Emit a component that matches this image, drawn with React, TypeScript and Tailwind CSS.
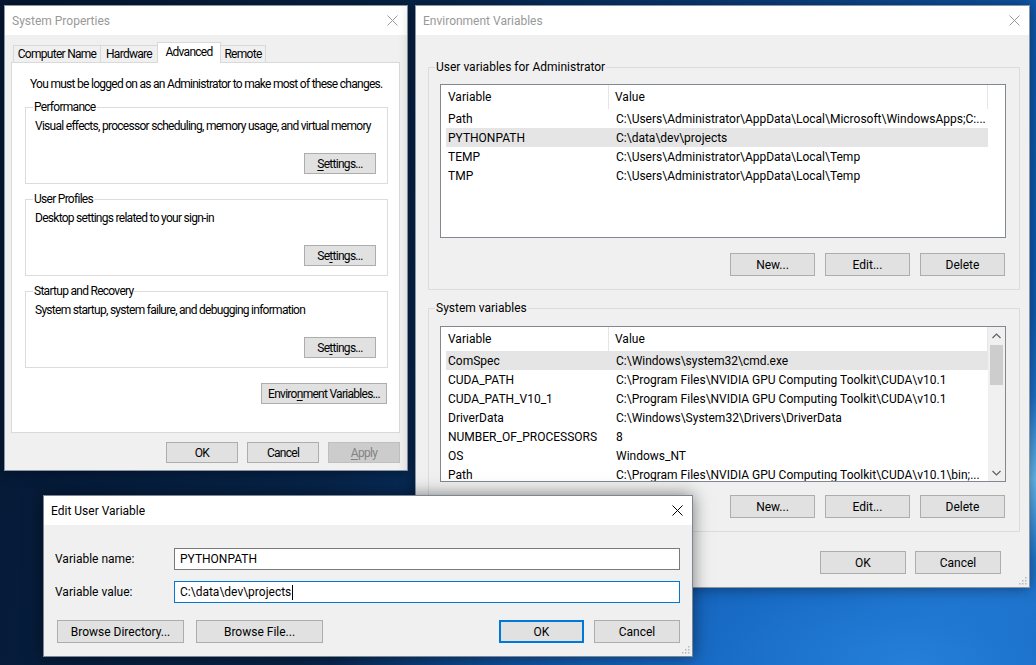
import React from 'react';

const FONT = "[font-family:'Segoe_UI',Roboto,'Liberation_Sans',sans-serif]";

function CloseX({ active }: { active?: boolean }) {
  return (
    <svg width="11" height="11" viewBox="0 0 11 11" className={active ? 'text-black' : 'text-[#999999]'}>
      <path d="M0.5 0.5L10.5 10.5M10.5 0.5L0.5 10.5" stroke="currentColor" strokeWidth="1" />
    </svg>
  );
}

function TitleBar({ title, active }: { title: string; active?: boolean }) {
  return (
    <div className="flex h-[29px] shrink-0 items-center justify-between bg-white pl-[7px] pr-[9px]">
      <span className={active ? 'text-black' : 'text-[#999999]'}>{title}</span>
      <CloseX active={active} />
    </div>
  );
}

type BtnProps = {
  children: React.ReactNode;
  className?: string;
  variant?: 'normal' | 'disabled' | 'default';
};

function Btn({ children, className = '', variant = 'normal' }: BtnProps) {
  const look =
    variant === 'disabled'
      ? 'border border-[#bfbfbf] bg-[#cccccc] text-[#838383]'
      : variant === 'default'
        ? 'border-2 border-[#0078d7] bg-[#e1e1e1] text-black'
        : 'border border-[#adadad] bg-[#e1e1e1] text-black';
  return (
    <div className={`flex shrink-0 items-center justify-center whitespace-nowrap ${look} ${className}`}>{children}</div>
  );
}

function U({ children }: { children: React.ReactNode }) {
  return <span className="underline underline-offset-[2px]">{children}</span>;
}

function SettingsGroup({ title, text, btn }: { title: string; text: string; btn: React.ReactNode }) {
  return (
    <fieldset className="border border-[#dcdcdc] pl-[8px] pr-[11px] pb-[9px]">
      <legend className="ml-[-1px] px-[1px]">{title}</legend>
      <p className="mt-[3px] ml-px whitespace-nowrap">{text}</p>
      <div className="mt-[19px] flex justify-end">
        <Btn className="h-[21px] w-[72px]">{btn}</Btn>
      </div>
    </fieldset>
  );
}

function SystemProperties() {
  const tabs = [
    { label: 'Computer Name', w: 'w-[88px]' },
    { label: 'Hardware', w: 'w-[58px]' },
    { label: 'Advanced', w: 'w-[64px]', selected: true },
    { label: 'Remote', w: 'w-[46px]' },
  ];
  return (
    <div className="absolute left-[4px] top-[5px] flex h-[466px] w-[404px] flex-col border border-[#8a96a6] bg-[#f0f0f0] shadow-[0_0_14px_rgba(0,0,0,0.45)]">
      <TitleBar title="System Properties" />
      <div className="flex flex-col pl-[6px] pr-[7px] pt-[7px] tracking-[-0.72px]">
        <div className="relative z-10 -mb-px flex h-[21px] items-end pl-[2px]">
          {tabs.map((t) =>
            t.selected ? (
              <div
                key={t.label}
                className={`-ml-px flex h-[21px] ${t.w} items-start justify-center whitespace-nowrap border border-b-0 border-[#d9d9d9] bg-white pt-[1px]`}
              >
                {t.label}
              </div>
            ) : (
              <div
                key={t.label}
                className={`-ml-px flex h-[18px] ${t.w} items-center justify-center whitespace-nowrap border border-[#d9d9d9] bg-[#f0f0f0] first:ml-0`}
              >
                {t.label}
              </div>
            ),
          )}
        </div>
        <div className="flex h-[371px] flex-col border border-[#d9d9d9] bg-white pl-[13px] pr-[11px] pt-[13px]">
          <p className="ml-[5px] whitespace-nowrap">You must be logged on as an Administrator to make most of these changes.</p>
          <div className="mt-[7px] flex flex-col gap-[7px]">
            <SettingsGroup
              title="Performance"
              text="Visual effects, processor scheduling, memory usage, and virtual memory"
              btn={<><U>S</U>ettings...</>}
            />
            <SettingsGroup
              title="User Profiles"
              text="Desktop settings related to your sign-in"
              btn={<>Se<U>t</U>tings...</>}
            />
            <SettingsGroup
              title="Startup and Recovery"
              text="System startup, system failure, and debugging information"
              btn={<>Se<U>t</U>tings...</>}
            />
          </div>
          <div className="mt-[15px] flex justify-end">
            <Btn className="mr-px h-[21px] w-[126px]">
              <span>
                Enviro<U>n</U>ment Variables...
              </span>
            </Btn>
          </div>
        </div>
        <div className="mt-[9px] flex justify-end gap-[9px]">
          <Btn className="h-[21px] w-[72px]">OK</Btn>
          <Btn className="h-[21px] w-[72px]">Cancel</Btn>
          <Btn variant="disabled" className="h-[21px] w-[72px]">
            <U>A</U>pply
          </Btn>
        </div>
      </div>
    </div>
  );
}

function Chevron({ up }: { up?: boolean }) {
  return (
    <svg width="9" height="6" viewBox="0 0 9 6" className="text-[#606060]">
      <path d={up ? 'M0.5 5L4.5 1L8.5 5' : 'M0.5 1L4.5 5L8.5 1'} fill="none" stroke="currentColor" strokeWidth="1.2" />
    </svg>
  );
}

type Row = [string, string];

function ListBox({ rows, height, scroll }: { rows: Row[]; height: string; scroll?: boolean }) {
  return (
    <div className={`flex ${height} overflow-hidden border border-[#828790] bg-white`}>
      <div className="flex w-[547px] flex-col">
        <div className="flex h-[24px] shrink-0">
          <div className="flex w-[168px] items-center border-r border-[#e5e5e5] pl-[7px]">Variable</div>
          <div className="flex w-[379px] items-center border-r border-[#e5e5e5] pl-[6px]">Value</div>
        </div>
        {rows.map(([name, value], i) => (
          <div
            key={name + i}
            className={`ml-[5px] flex h-[19px] w-[542px] shrink-0 items-center ${i === (scroll ? 0 : 1) ? 'bg-[#e5e5e5]' : ''}`}
          >
            <span className="w-[170px] pl-[2px] whitespace-nowrap">{name}</span>
            <span className="whitespace-nowrap">{value}</span>
          </div>
        ))}
      </div>
      {scroll && (
        <div className="flex w-[17px] flex-col bg-[#f0f0f0]">
          <div className="flex h-[17px] items-center justify-center">
            <Chevron up />
          </div>
          <div className="mx-[2px] mt-px h-[40px] bg-[#cdcdcd]" />
          <div className="flex-1" />
          <div className="flex h-[17px] items-center justify-center">
            <Chevron />
          </div>
        </div>
      )}
    </div>
  );
}

function Grip() {
  return (
    <svg width="9" height="9" viewBox="0 0 9 9" className="absolute bottom-[2px] right-[2px] text-[#b8b8b8]">
      <rect x="7" y="1" width="1.5" height="1.5" fill="currentColor" />
      <rect x="4" y="4" width="1.5" height="1.5" fill="currentColor" />
      <rect x="7" y="4" width="1.5" height="1.5" fill="currentColor" />
      <rect x="1" y="7" width="1.5" height="1.5" fill="currentColor" />
      <rect x="4" y="7" width="1.5" height="1.5" fill="currentColor" />
      <rect x="7" y="7" width="1.5" height="1.5" fill="currentColor" />
    </svg>
  );
}

const userVars: Row[] = [
  ['Path', 'C:\\Users\\Administrator\\AppData\\Local\\Microsoft\\WindowsApps;C:...'],
  ['PYTHONPATH', 'C:\\data\\dev\\projects'],
  ['TEMP', 'C:\\Users\\Administrator\\AppData\\Local\\Temp'],
  ['TMP', 'C:\\Users\\Administrator\\AppData\\Local\\Temp'],
];

const systemVars: Row[] = [
  ['ComSpec', 'C:\\Windows\\system32\\cmd.exe'],
  ['CUDA_PATH', 'C:\\Program Files\\NVIDIA GPU Computing Toolkit\\CUDA\\v10.1'],
  ['CUDA_PATH_V10_1', 'C:\\Program Files\\NVIDIA GPU Computing Toolkit\\CUDA\\v10.1'],
  ['DriverData', 'C:\\Windows\\System32\\Drivers\\DriverData'],
  ['NUMBER_OF_PROCESSORS', '8'],
  ['OS', 'Windows_NT'],
  ['Path', 'C:\\Program Files\\NVIDIA GPU Computing Toolkit\\CUDA\\v10.1\\bin;...'],
];

function EnvironmentVariables() {
  return (
    <div className="absolute left-[415px] top-[5px] flex h-[583px] w-[615px] flex-col border border-[#8a96a6] bg-[#f0f0f0] shadow-[0_0_14px_rgba(0,0,0,0.45)]">
      <TitleBar title="Environment Variables" />
      <div className="flex flex-col pl-[12px] pr-[9px] pt-[24px]">
        <fieldset className="border border-[#dcdcdc] pl-[11px] pr-[13px] pb-[13px]">
          <legend className="ml-[-5px] px-[1px]">User variables for Administrator</legend>
          <div className="mt-[9px]">
            <ListBox rows={userVars} height="h-[154px]" />
          </div>
          <div className="mt-[15px] flex justify-end gap-[10px]">
            <Btn className="h-[23px] w-[85px]">New...</Btn>
            <Btn className="h-[23px] w-[85px]">Edit...</Btn>
            <Btn className="mr-px h-[23px] w-[85px]">Delete</Btn>
          </div>
        </fieldset>
        <fieldset className="mt-[10px] border border-[#dcdcdc] pl-[11px] pr-[13px] pb-[13px]">
          <legend className="ml-[-5px] px-[1px]">System variables</legend>
          <div className="mt-[10px]">
            <ListBox rows={systemVars} height="h-[156px]" scroll />
          </div>
          <div className="mt-[13px] flex justify-end gap-[10px]">
            <Btn className="h-[23px] w-[85px]">New...</Btn>
            <Btn className="h-[23px] w-[85px]">Edit...</Btn>
            <Btn className="mr-px h-[23px] w-[85px]">Delete</Btn>
          </div>
        </fieldset>
        <div className="mr-[19px] mt-[19px] flex justify-end gap-[9px]">
          <Btn className="h-[23px] w-[86px]">OK</Btn>
          <Btn className="h-[23px] w-[86px]">Cancel</Btn>
        </div>
      </div>
      <Grip />
    </div>
  );
}

function EditUserVariable() {
  return (
    <div className="absolute left-[43px] top-[495px] flex h-[162px] w-[650px] flex-col border border-[#7d8794] bg-[#f0f0f0] shadow-[0_0_16px_rgba(0,0,0,0.5)]">
      <TitleBar title="Edit User Variable" active />
      <div className="flex flex-col pl-[11px] pr-[12px] pt-[23px]">
        <div className="flex items-center">
          <span className="w-[119px]">Variable name:</span>
          <div className="flex h-[22px] flex-1 items-center border border-[#7a7a7a] bg-white pl-[5px]">PYTHONPATH</div>
        </div>
        <div className="mt-[11px] flex items-center">
          <span className="w-[119px]">Variable value:</span>
          <div className="flex h-[22px] flex-1 items-center border border-[#0078d7] bg-white pl-[5px]">
            C:\data\dev\projects
            <span className="ml-px h-[15px] w-px bg-black" />
          </div>
        </div>
        <div className="mt-[17px] flex items-center">
          <Btn className="ml-[2px] h-[23px] w-[127px]">Browse Directory...</Btn>
          <Btn className="ml-[12px] h-[23px] w-[127px]">Browse File...</Btn>
          <div className="flex-1" />
          <Btn variant="default" className="h-[23px] w-[85px]">OK</Btn>
          <Btn className="ml-[10px] h-[23px] w-[86px]">Cancel</Btn>
        </div>
      </div>
      <Grip />
    </div>
  );
}

export default function App() {
  return (
    <div
      className={`relative h-[665px] w-[1036px] overflow-hidden text-[12px] leading-[16px] text-black ${FONT} [background:radial-gradient(ellipse_40%_35%_at_100%_72%,#6cc0f4_0%,rgba(40,130,220,0.6)_35%,transparent_70%),radial-gradient(ellipse_70%_55%_at_88%_100%,#2580da_0%,#1362bb_40%,transparent_80%),linear-gradient(100deg,#051833_0%,#072449_35%,#0a3c7a_62%,#1062bf_100%)]`}
    >
      <SystemProperties />
      <EnvironmentVariables />
      <EditUserVariable />
    </div>
  );
}
